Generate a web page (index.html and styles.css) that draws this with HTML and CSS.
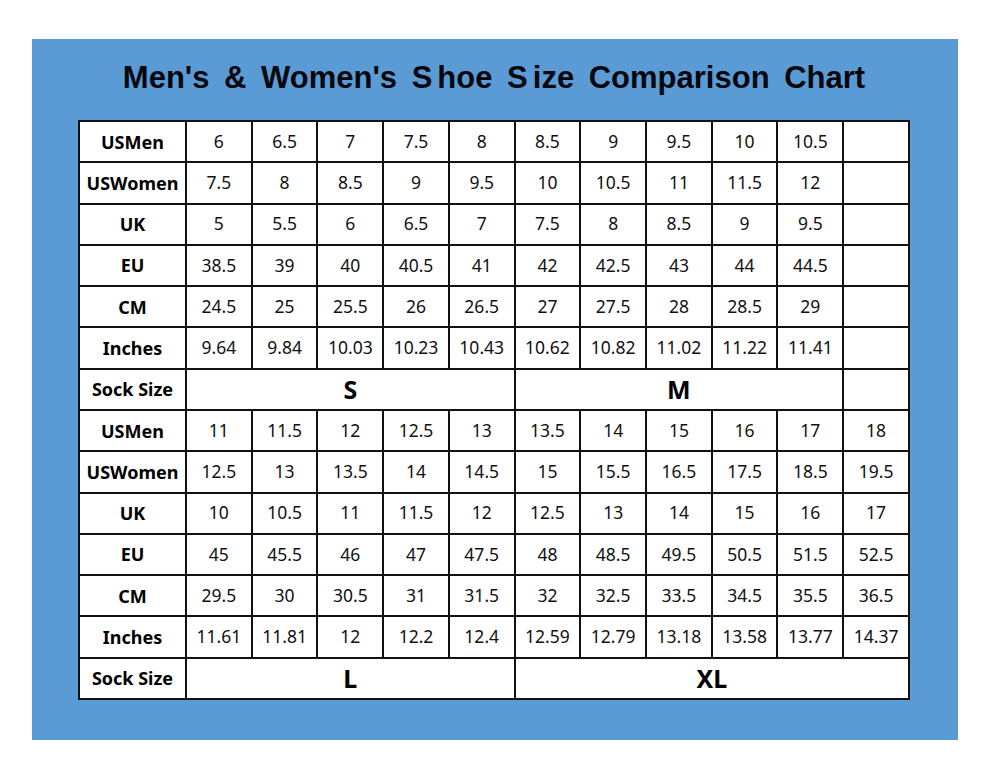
FILE: index.html
```html
<!DOCTYPE html>
<html>
<head>
<meta charset="utf-8">
<link rel="stylesheet" href="styles.css">
</head>
<body>
<div class="panel">
  <h1 class="title">Men's &amp; Women's <span class="split">S</span>hoe <span class="split">S</span>ize Comparison Chart</h1>
  <table class="chart">
    <tr><th>USMen</th><td>6</td><td>6.5</td><td>7</td><td>7.5</td><td>8</td><td>8.5</td><td>9</td><td>9.5</td><td>10</td><td>10.5</td><td></td></tr>
    <tr><th>USWomen</th><td>7.5</td><td>8</td><td>8.5</td><td>9</td><td>9.5</td><td>10</td><td>10.5</td><td>11</td><td>11.5</td><td>12</td><td></td></tr>
    <tr><th>UK</th><td>5</td><td>5.5</td><td>6</td><td>6.5</td><td>7</td><td>7.5</td><td>8</td><td>8.5</td><td>9</td><td>9.5</td><td></td></tr>
    <tr><th>EU</th><td>38.5</td><td>39</td><td>40</td><td>40.5</td><td>41</td><td>42</td><td>42.5</td><td>43</td><td>44</td><td>44.5</td><td></td></tr>
    <tr><th>CM</th><td>24.5</td><td>25</td><td>25.5</td><td>26</td><td>26.5</td><td>27</td><td>27.5</td><td>28</td><td>28.5</td><td>29</td><td></td></tr>
    <tr><th>Inches</th><td>9.64</td><td>9.84</td><td>10.03</td><td>10.23</td><td>10.43</td><td>10.62</td><td>10.82</td><td>11.02</td><td>11.22</td><td>11.41</td><td></td></tr>
    <tr><th>Sock Size</th><td class="sock" colspan="5">S</td><td class="sock" colspan="5">M</td><td></td></tr>
    <tr><th>USMen</th><td>11</td><td>11.5</td><td>12</td><td>12.5</td><td>13</td><td>13.5</td><td>14</td><td>15</td><td>16</td><td>17</td><td>18</td></tr>
    <tr><th>USWomen</th><td>12.5</td><td>13</td><td>13.5</td><td>14</td><td>14.5</td><td>15</td><td>15.5</td><td>16.5</td><td>17.5</td><td>18.5</td><td>19.5</td></tr>
    <tr><th>UK</th><td>10</td><td>10.5</td><td>11</td><td>11.5</td><td>12</td><td>12.5</td><td>13</td><td>14</td><td>15</td><td>16</td><td>17</td></tr>
    <tr><th>EU</th><td>45</td><td>45.5</td><td>46</td><td>47</td><td>47.5</td><td>48</td><td>48.5</td><td>49.5</td><td>50.5</td><td>51.5</td><td>52.5</td></tr>
    <tr><th>CM</th><td>29.5</td><td>30</td><td>30.5</td><td>31</td><td>31.5</td><td>32</td><td>32.5</td><td>33.5</td><td>34.5</td><td>35.5</td><td>36.5</td></tr>
    <tr><th>Inches</th><td>11.61</td><td>11.81</td><td>12</td><td>12.2</td><td>12.4</td><td>12.59</td><td>12.79</td><td>13.18</td><td>13.58</td><td>13.77</td><td>14.37</td></tr>
    <tr><th>Sock Size</th><td class="sock" colspan="5">L</td><td class="sock" colspan="6">XL</td></tr>
  </table>
</div>
</body>
</html>
```
FILE: styles.css
```css
html, body {
  margin: 0;
  padding: 0;
  background: #ffffff;
}
body {
  font-family: "Noto Sans", sans-serif;
  color: #000;
}
.panel {
  margin: 39px 0 0 32px;
  width: 926px;
  height: 701px;
  background: #5b9bd5;
  box-sizing: border-box;
  padding: 0 48px 0 46px;
  display: flex;
  flex-direction: column;
}
.title {
  margin: 0;
  height: 81px;
  display: flex;
  align-items: center;
  justify-content: center;
  font-family: "Liberation Sans", Arial, sans-serif;
  font-weight: 700;
  font-size: 31px;
  word-spacing: 6px;
  color: #05070d;
  padding-bottom: 3px;
  box-sizing: border-box;
  white-space: pre;
}
.split {
  margin-right: 5px;
}
.chart {
  border-collapse: collapse;
  width: 832px;
  table-layout: fixed;
  background: #fff;
  border: 2px solid #111;
}
.chart tr {
  height: 41.29px;
}
.chart th, .chart td {
  border: 2px solid #111;
  padding: 0;
  text-align: center;
  font-size: 17.5px;
  font-weight: 400;
  line-height: 1;
  color: #111;
}
.chart th {
  width: 105px;
  font-weight: 700;
  font-size: 18px;
  color: #000;
}
.chart td.sock {
  font-weight: 700;
  font-size: 25px;
  color: #000;
}
```
